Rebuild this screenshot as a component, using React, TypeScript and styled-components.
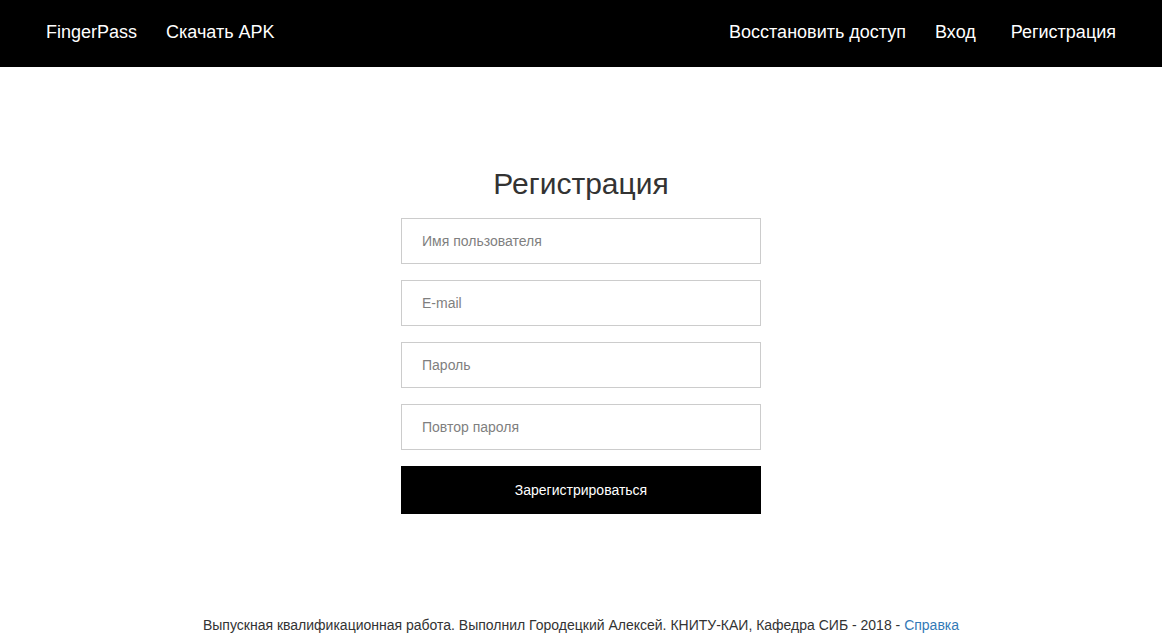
import React from 'react';
import styled, { createGlobalStyle } from 'styled-components';

const GlobalStyle = createGlobalStyle`
  html, body {
    margin: 0;
    padding: 0;
    background: #fff;
    font-family: "Liberation Sans", Arial, sans-serif;
    color: #333;
  }
  * {
    box-sizing: border-box;
  }
`;

const Page = styled.div`
  min-height: 100vh;
  display: flex;
  flex-direction: column;
`;

const Navbar = styled.nav`
  height: 67px;
  background: #000;
  display: flex;
  align-items: center;
  justify-content: space-between;
  padding: 0 46px 4px;
`;

const NavGroup = styled.div`
  display: flex;
  align-items: center;
`;

const NavLink = styled.a<{ $gap?: number }>`
  color: #fff;
  font-size: 18px;
  line-height: 20px;
  text-decoration: none;
  margin-left: ${(p) => p.$gap ?? 0}px;
  cursor: pointer;
`;

const Main = styled.main`
  flex: 1;
  display: flex;
  flex-direction: column;
  align-items: center;
  padding-top: 100px;
`;

const Title = styled.h2`
  margin: 0 0 18px;
  font-size: 30px;
  font-weight: 500;
  line-height: 33px;
  color: #333;
`;

const Form = styled.form`
  width: 360px;
  display: flex;
  flex-direction: column;
  gap: 16px;
`;

const Input = styled.input`
  width: 100%;
  height: 46px;
  border: 1px solid #ccc;
  border-radius: 0;
  padding: 0 20px;
  font-family: "Liberation Sans", Arial, sans-serif;
  font-size: 14px;
  color: #555;
  outline: none;

  &::placeholder {
    color: #7f7f7f;
  }
`;

const Submit = styled.button`
  width: 100%;
  height: 48px;
  border: none;
  border-radius: 0;
  background: #000;
  color: #fff;
  font-family: "Liberation Sans", Arial, sans-serif;
  font-size: 14px;
  cursor: pointer;
`;

const Footer = styled.footer`
  height: 20px;
  text-align: center;
  font-size: 14px;
  line-height: 20px;
  color: #333;
`;

const FooterLink = styled.a`
  color: #337ab7;
  text-decoration: none;
`;

const App: React.FC = () => {
  return (
    <Page>
      <GlobalStyle />
      <Navbar>
        <NavGroup>
          <NavLink>FingerPass</NavLink>
          <NavLink $gap={29}>Скачать APK</NavLink>
        </NavGroup>
        <NavGroup>
          <NavLink>Восстановить доступ</NavLink>
          <NavLink $gap={29}>Вход</NavLink>
          <NavLink $gap={35}>Регистрация</NavLink>
        </NavGroup>
      </Navbar>
      <Main>
        <Title>Регистрация</Title>
        <Form onSubmit={(e) => e.preventDefault()}>
          <Input type="text" placeholder="Имя пользователя" />
          <Input type="email" placeholder="E-mail" />
          <Input type="password" placeholder="Пароль" />
          <Input type="password" placeholder="Повтор пароля" />
          <Submit type="submit">Зарегистрироваться</Submit>
        </Form>
      </Main>
      <Footer>
        Выпускная квалификационная работа. Выполнил Городецкий Алексей. КНИТУ-КАИ, Кафедра СИБ - 2018 -{' '}
        <FooterLink>Справка</FooterLink>
      </Footer>
    </Page>
  );
};

export default App;
